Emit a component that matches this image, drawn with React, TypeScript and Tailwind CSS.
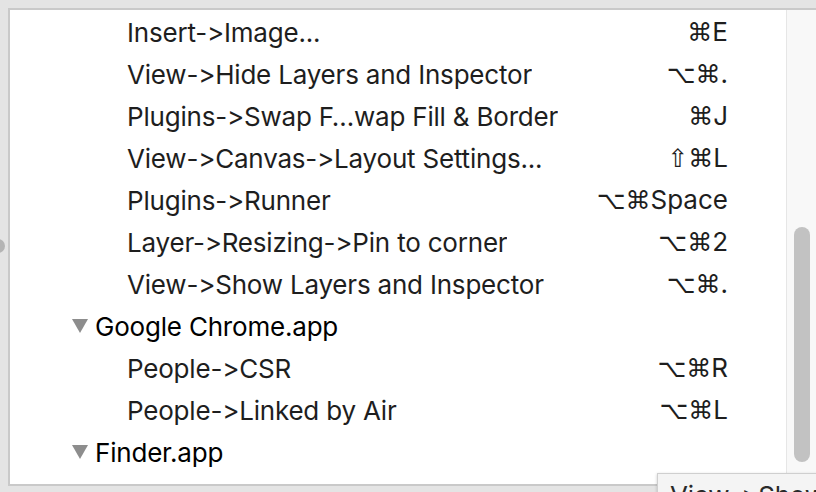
import React from 'react';

type Row =
  | { kind: 'group'; name: string }
  | { kind: 'item'; name: string; keys: string };

const ROWS: Row[] = [
  { kind: 'item', name: 'Insert->Image...', keys: '⌘E' },
  { kind: 'item', name: 'View->Hide Layers and Inspector', keys: '⌥⌘.' },
  { kind: 'item', name: 'Plugins->Swap F…wap Fill & Border', keys: '⌘J' },
  { kind: 'item', name: 'View->Canvas->Layout Settings...', keys: '⇧⌘L' },
  { kind: 'item', name: 'Plugins->Runner', keys: '⌥⌘Space' },
  { kind: 'item', name: 'Layer->Resizing->Pin to corner', keys: '⌥⌘2' },
  { kind: 'item', name: 'View->Show Layers and Inspector', keys: '⌥⌘.' },
  { kind: 'group', name: 'Google Chrome.app' },
  { kind: 'item', name: 'People->CSR', keys: '⌥⌘R' },
  { kind: 'item', name: 'People->Linked by Air', keys: '⌥⌘L' },
  { kind: 'group', name: 'Finder.app' },
];

// Inter turns "->" into an arrow unless contextual alternates are off
const FONT = {
  fontFamily: 'Inter, "Noto Sans", "DejaVu Sans", sans-serif',
  fontFeatureSettings: '"calt" 0, "liga" 0',
};

function Keys({ keys }: { keys: string }) {
  return (
    <span className="shrink-0 whitespace-nowrap text-[26px] text-[#1e1e1e]">
      {[...keys].map((ch, i) =>
        '⌘⌥⇧'.includes(ch) ? (
          <span key={i} style={{ fontFamily: '"DejaVu Sans", sans-serif' }} className="text-[25px]">
            {ch}
          </span>
        ) : (
          <span key={i}>{ch}</span>
        ),
      )}
    </span>
  );
}

function Disclosure() {
  return (
    <svg width="16" height="14" viewBox="0 0 16 14" className="mr-[7px] shrink-0">
      <polygon points="0,0 16,0 8,14" fill="#8d8d8d" />
    </svg>
  );
}

export default function App() {
  return (
    <div className="relative h-[492px] w-[816px] overflow-hidden bg-[#e4e4e4] pl-2 pt-2" style={FONT}>
      {/* stray control peeking in at left edge */}
      <div className="absolute left-[-9px] top-[239px] h-[14px] w-[14px] rounded-full bg-[#b4b4b4]" />

      <div className="flex h-[478px] border-b-2 border-l-2 border-t-2 border-[#c9c9c9] bg-white">
        <ul className="min-w-0 flex-1 pt-[1px]">
          {ROWS.map((r, i) =>
            r.kind === 'group' ? (
              <li key={i} className="flex h-[42px] items-center pl-[62px]">
                <Disclosure />
                <span className="text-[26px] tracking-[-0.2px] text-black">{r.name}</span>
              </li>
            ) : (
              <li key={i} className="flex h-[42px] items-center justify-between pl-[117px] pr-[58px]">
                <span className="truncate text-[26px] tracking-[-0.2px] text-[#1e1e1e]">{r.name}</span>
                <Keys keys={r.keys} />
              </li>
            ),
          )}
        </ul>

        {/* scroll track */}
        <div className="w-[30px] shrink-0 border-l border-[#e6e6e6] bg-[#f8f8f8] pl-[7px] pt-[217px]">
          <div className="h-[235px] w-[16px] rounded-full bg-[#c2c2c2]" />
        </div>
      </div>

      {/* tooltip */}
      <div className="absolute left-[657px] top-[473px] whitespace-nowrap border border-[#cfcfcf] bg-[#f4f4f4] pl-[12px] pr-3 pt-[2px] text-[26px] tracking-[-0.2px] text-[#2a2a2a] shadow-[0_1px_3px_rgba(0,0,0,0.2)]">
        {'View->Show Layers and Inspector'}
      </div>
    </div>
  );
}
